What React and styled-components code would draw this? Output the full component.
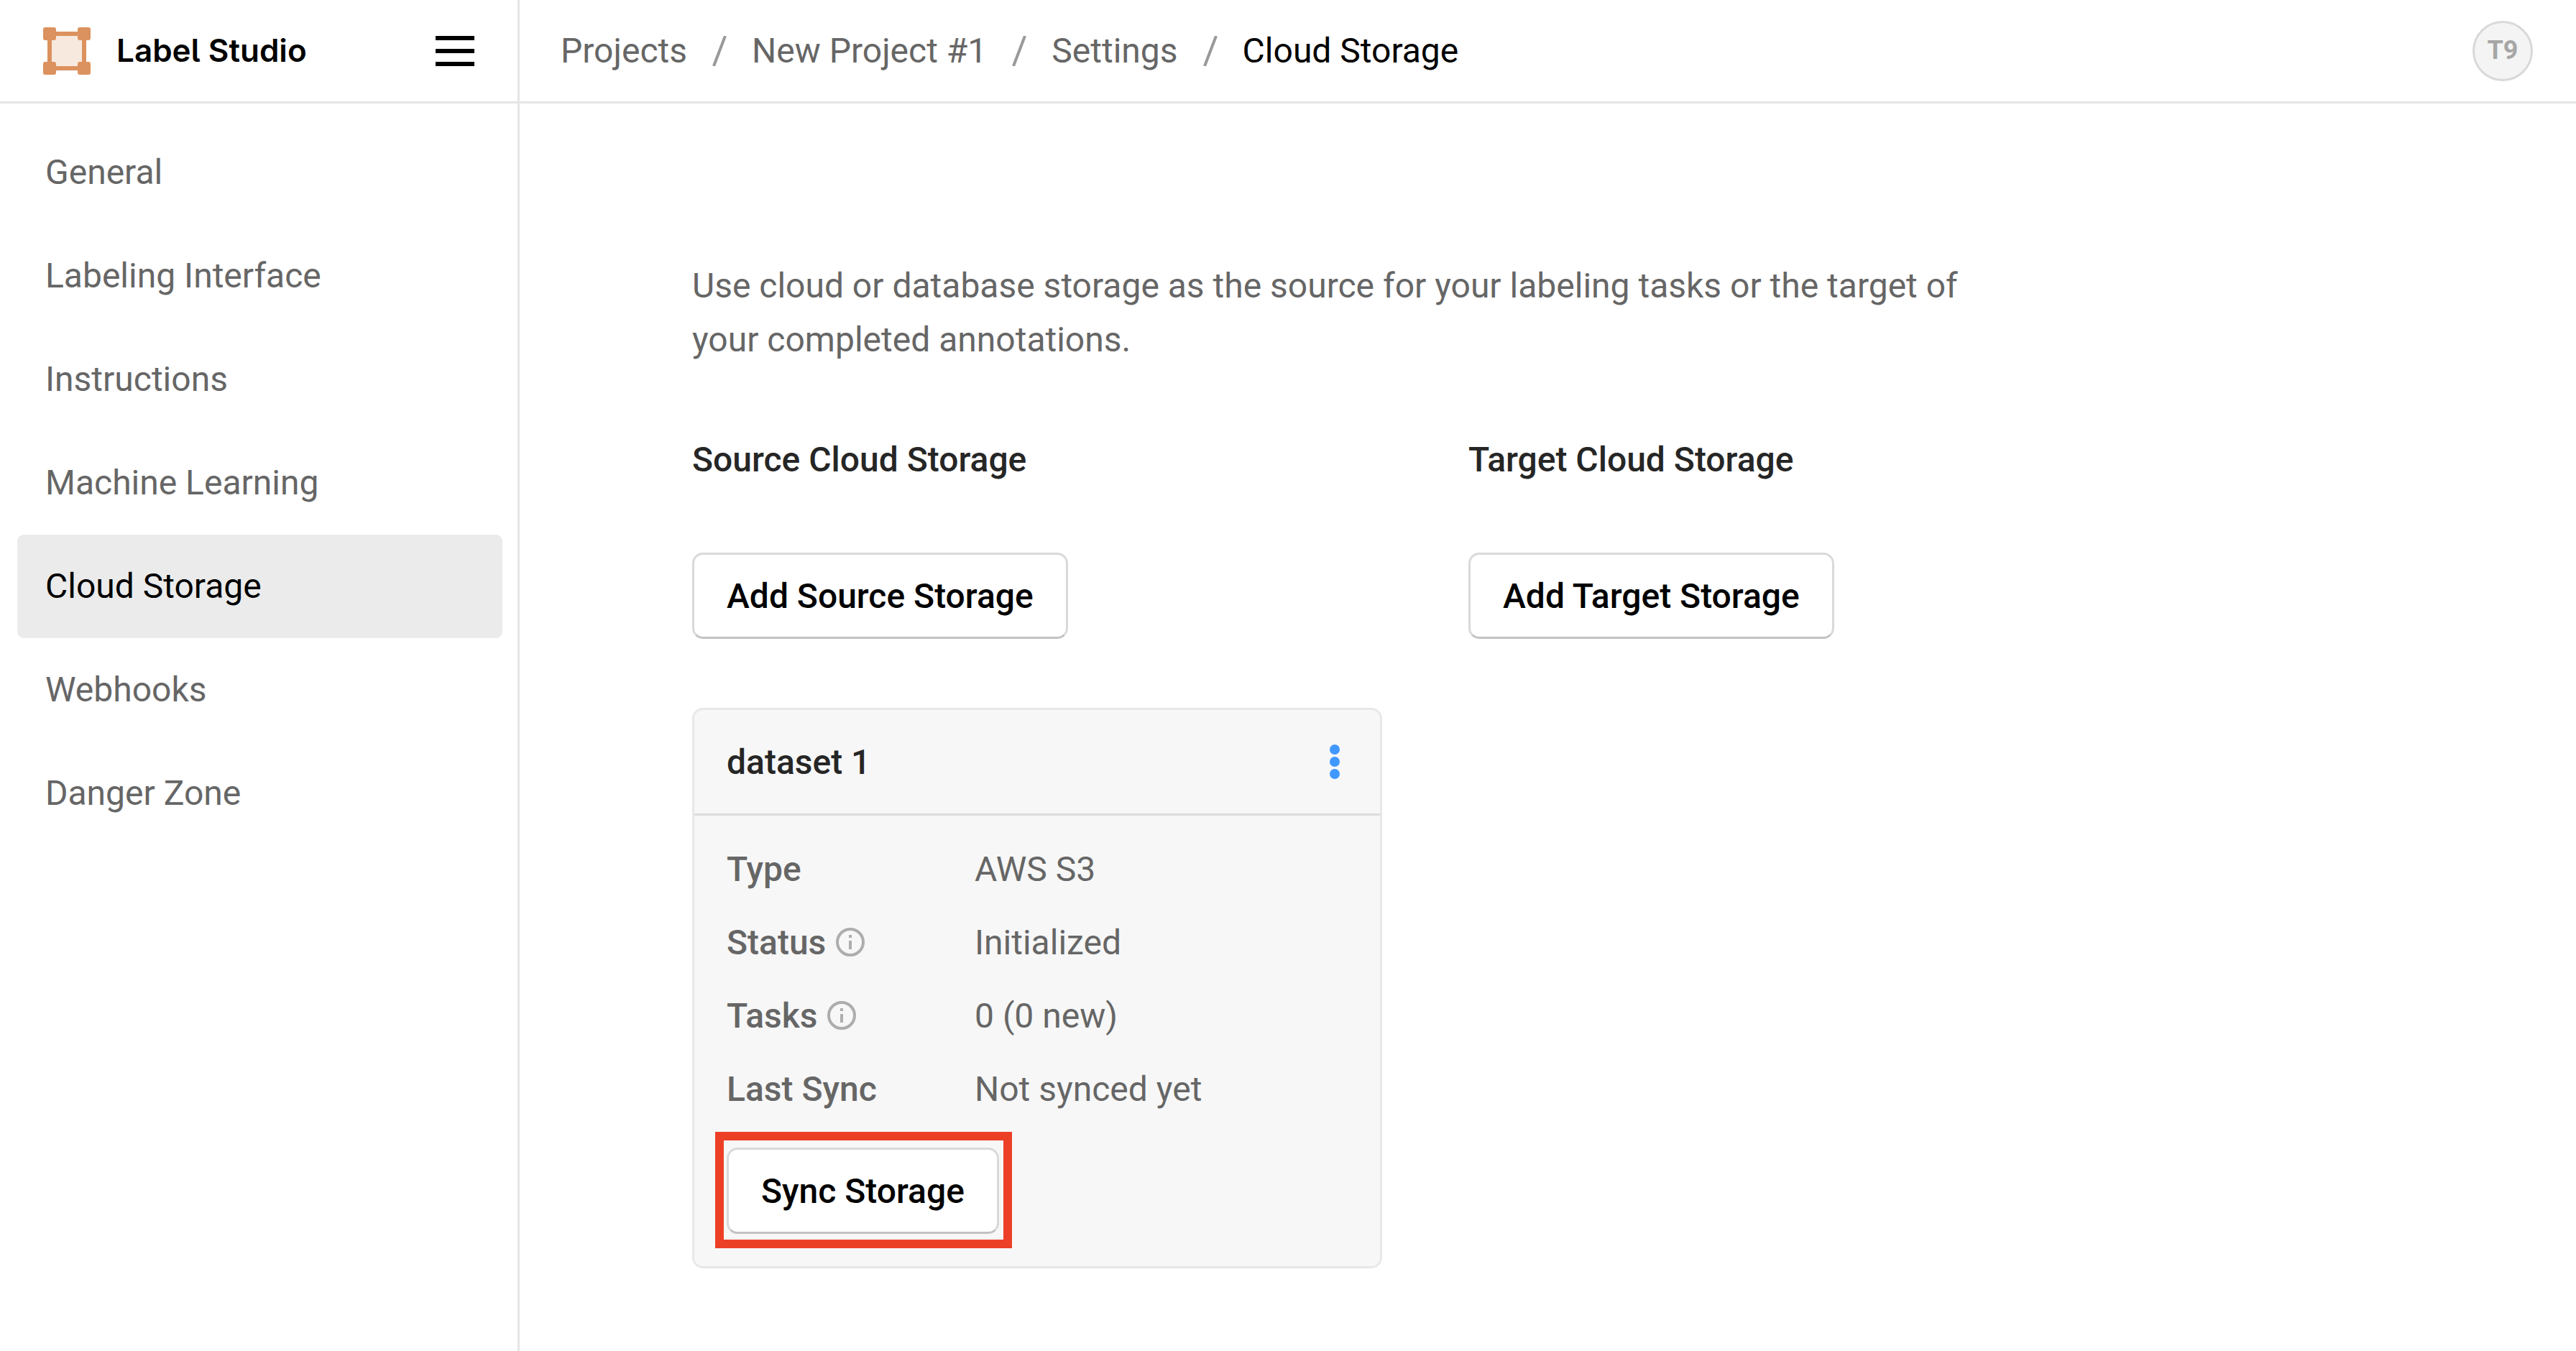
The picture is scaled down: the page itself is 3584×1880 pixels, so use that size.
import React from "react";
import styled, { createGlobalStyle } from "styled-components";

const GlobalStyle = createGlobalStyle`
  *, *::before, *::after { box-sizing: border-box; }
  body {
    margin: 0;
    background: #fff;
    color: #666;
    font-family: Roboto, "Liberation Sans", sans-serif;
    font-size: 48px;
    line-height: 75px;
  }
  button { font: inherit; cursor: pointer; }
  a { color: inherit; text-decoration: none; }
`;

const Page = styled.div`
  min-height: 100vh;
  display: flex;
  flex-direction: column;
`;

const TopBar = styled.header`
  display: flex;
  align-items: stretch;
  height: 144px;
  border-bottom: 3px solid #e5e5e5;
`;

const Brand = styled.div`
  display: flex;
  align-items: center;
  width: 723px;
  padding: 0 60px;
  border-right: 3px solid #e5e5e5;
`;

const BrandLink = styled.a`
  display: flex;
  align-items: center;
  gap: 36px;
  flex: 1;
  color: #000;
  font-family: Inter, Roboto, sans-serif;
  font-size: 44px;
  font-weight: 600;
  font-feature-settings: "cv05";
`;

const MenuButton = styled.button`
  display: flex;
  flex-direction: column;
  justify-content: space-between;
  width: 54px;
  height: 42px;
  padding: 0;
  border: 0;
  background: none;
`;

const MenuBar = styled.span`
  height: 6px;
  background: #000;
`;

const TopContent = styled.div`
  flex: 1;
  display: flex;
  align-items: center;
  justify-content: space-between;
  padding: 0 60px 0 57px;
`;

const Crumbs = styled.ol`
  display: flex;
  align-items: center;
  margin: 0;
  padding: 0;
  list-style: none;
`;

const Crumb = styled.li`
  display: flex;
  align-items: center;
  color: ${(p) => (p.$current ? "#000" : "#666")};
`;

const Slash = styled.svg`
  display: block;
  width: 20px;
  height: 42px;
  margin: 0 35px;
`;

const Avatar = styled.button`
  display: grid;
  place-items: center;
  width: 84px;
  height: 84px;
  padding: 0;
  border: 3px solid #d9d9d9;
  border-radius: 50%;
  background: #f4f4f4;
  color: #a6a6a6;
  font-size: 36px;
  font-weight: 700;
`;

const Body = styled.div`
  flex: 1;
  display: flex;
`;

const Sidebar = styled.nav`
  width: 723px;
  padding: 24px 21px 24px 24px;
  border-right: 3px solid #e5e5e5;
`;

const NavItem = styled.a`
  display: flex;
  align-items: center;
  height: 144px;
  padding: 0 39px;
  border-radius: 9px;
  background: ${(p) => (p.$active ? "#ebebeb" : "transparent")};
  color: ${(p) => (p.$active ? "#000" : "#666")};
  line-height: 72px;
`;

const Main = styled.main`
  flex: 1;
  padding: 216px 240px 96px;
`;

const Intro = styled.p`
  max-width: 1800px;
  margin: 0;
`;

const Columns = styled.div`
  display: grid;
  grid-template-columns: repeat(2, 960px);
  gap: 120px;
  align-items: start;
  margin-top: 92px;
`;

const Column = styled.section`
  display: flex;
  flex-direction: column;
  align-items: flex-start;
`;

const ColumnTitle = styled.h2`
  margin: 0 0 92px;
  color: #262626;
  font-size: 48px;
  font-weight: 500;
  line-height: 75px;
`;

const Button = styled.button`
  height: 120px;
  padding: 0 45px;
  border: 3px solid #d9d9d9;
  border-bottom-color: #c2c2c2;
  border-radius: 15px;
  background: #fff;
  color: #000;
  font-weight: 500;
`;

const Card = styled.article`
  width: 100%;
  margin-top: 96px;
  border: 3px solid #e8e8e8;
  border-radius: 15px;
  background: #f7f7f7;
`;

const CardHeader = styled.header`
  display: flex;
  align-items: center;
  justify-content: space-between;
  height: 147px;
  padding: 0 45px;
  border-bottom: 3px solid #dcdcdc;
`;

const CardTitle = styled.h3`
  margin: 0;
  color: #262626;
  font-size: 48px;
  font-weight: 500;
`;

const MoreButton = styled.button`
  display: grid;
  place-items: center;
  width: 36px;
  height: 72px;
  padding: 0;
  border: 0;
  background: none;
`;

const CardBody = styled.div`
  padding: 23px 45px 45px;
`;

const Details = styled.dl`
  display: grid;
  grid-template-columns: 345px 1fr;
  grid-auto-rows: 102px;
  align-items: center;
  margin: 0;
`;

const Term = styled.dt`
  display: flex;
  align-items: center;
  gap: 14px;
  font-weight: 500;
`;

const Value = styled.dd`
  margin: 0;
`;

const Highlight = styled.div`
  width: fit-content;
  margin: 9px -18px -20px -16px;
  padding: 10px 6px 8px 4px;
  border: 12px solid #ec4026;
`;

const navItems = [
  "General",
  "Labeling Interface",
  "Instructions",
  "Machine Learning",
  "Cloud Storage",
  "Webhooks",
  "Danger Zone",
];

const crumbs = ["Projects", "New Project #1", "Settings", "Cloud Storage"];

const details = [
  { label: "Type", value: "AWS S3" },
  { label: "Status", value: "Initialized", info: true },
  { label: "Tasks", value: "0 (0 new)", info: true },
  { label: "Last Sync", value: "Not synced yet" },
];

const Logo = () => (
  <svg width="66" height="66" viewBox="0 0 66 66" aria-hidden="true">
    <rect x="9" y="9" width="48" height="48" fill="#f8e9df" stroke="#dc925e" strokeWidth="6" />
    {[0, 48].map((x) =>
      [0, 48].map((y) => (
        <rect key={`${x}-${y}`} x={x} y={y} width="18" height="18" rx="3" fill="#dc925e" />
      ))
    )}
  </svg>
);

const InfoIcon = () => (
  <svg width="40" height="40" viewBox="0 0 40 40" aria-hidden="true">
    <circle cx="20" cy="20" r="18" fill="none" stroke="#adadad" strokeWidth="4" />
    <rect x="18" y="10" width="4" height="4" fill="#adadad" />
    <rect x="18" y="18" width="4" height="12" fill="#adadad" />
  </svg>
);

const DotsIcon = () => (
  <svg width="14" height="48" viewBox="0 0 14 48" aria-hidden="true">
    {[7, 24, 41].map((y) => (
      <circle key={y} cx="7" cy={y} r="7" fill="#4098ff" />
    ))}
  </svg>
);

export default function App() {
  return (
    <Page>
      <GlobalStyle />
      <TopBar>
        <Brand>
          <BrandLink href="#home">
            <Logo />
            Label Studio
          </BrandLink>
          <MenuButton type="button" aria-label="Menu">
            <MenuBar />
            <MenuBar />
            <MenuBar />
          </MenuButton>
        </Brand>
        <TopContent>
          <nav aria-label="Breadcrumb">
            <Crumbs>
              {crumbs.map((name, i) => (
                <Crumb key={name} $current={i === crumbs.length - 1}>
                  {i > 0 && (
                    <Slash viewBox="0 0 20 42" aria-hidden="true">
                      <path d="M18 0 L2 42" stroke="#999" strokeWidth="4" />
                    </Slash>
                  )}
                  <a href="#crumb">{name}</a>
                </Crumb>
              ))}
            </Crumbs>
          </nav>
          <Avatar type="button">T9</Avatar>
        </TopContent>
      </TopBar>
      <Body>
        <Sidebar aria-label="Settings">
          {navItems.map((name) => (
            <NavItem key={name} href="#section" $active={name === "Cloud Storage"}>
              {name}
            </NavItem>
          ))}
        </Sidebar>
        <Main>
          <Intro>
            Use cloud or database storage as the source for your labeling tasks or the target of
            your completed annotations.
          </Intro>
          <Columns>
            <Column>
              <ColumnTitle>Source Cloud Storage</ColumnTitle>
              <Button type="button">Add Source Storage</Button>
              <Card>
                <CardHeader>
                  <CardTitle>dataset 1</CardTitle>
                  <MoreButton type="button" aria-label="More actions">
                    <DotsIcon />
                  </MoreButton>
                </CardHeader>
                <CardBody>
                  <Details>
                    {details.map(({ label, value, info }) => (
                      <React.Fragment key={label}>
                        <Term>
                          {label}
                          {info && <InfoIcon />}
                        </Term>
                        <Value>{value}</Value>
                      </React.Fragment>
                    ))}
                  </Details>
                  <Highlight>
                    <Button type="button">Sync Storage</Button>
                  </Highlight>
                </CardBody>
              </Card>
            </Column>
            <Column>
              <ColumnTitle>Target Cloud Storage</ColumnTitle>
              <Button type="button">Add Target Storage</Button>
            </Column>
          </Columns>
        </Main>
      </Body>
    </Page>
  );
}
